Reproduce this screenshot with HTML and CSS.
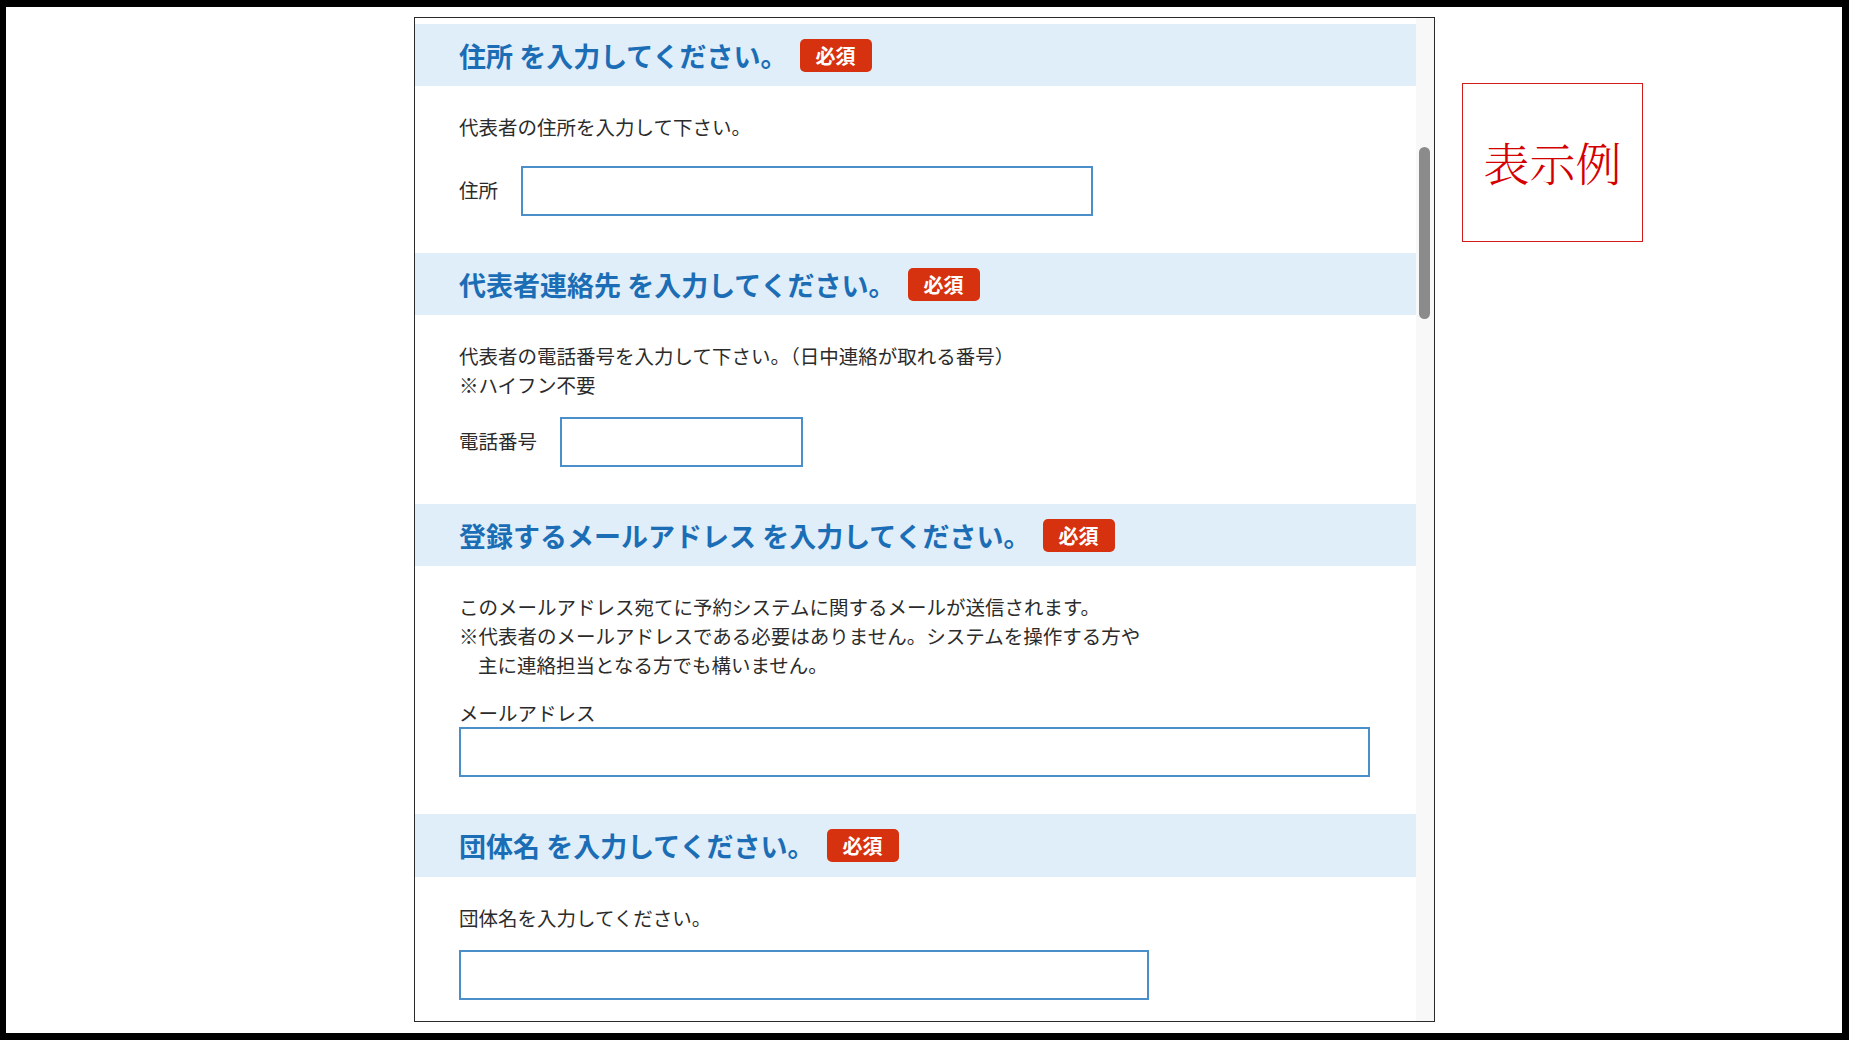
FILE: index.html
```html
<!DOCTYPE html>
<html lang="ja">
<head>
    <meta charset="UTF-8">
    <meta name="viewport" content="width=device-width, initial-scale=1.0">
    <title>申請フォーム 表示例</title>
    <link rel="stylesheet" href="styles.css">
</head>
<body>

    <div class="screen">
        <div class="panel">
            <form class="form">

                <!-- 住所 -->
                <section class="block">
                    <h2 class="block-title">住所 を入力してください。<span class="required">必須</span></h2>
                    <div class="block-body">
                        <p class="note">代表者の住所を入力して下さい。</p>
                        <div class="row row-first">
                            <label class="label" for="address">住所</label>
                            <input type="text" id="address" class="input input-address">
                        </div>
                    </div>
                </section>

                <!-- 代表者連絡先 -->
                <section class="block">
                    <h2 class="block-title">代表者連絡先 を入力してください。<span class="required">必須</span></h2>
                    <div class="block-body">
                        <p class="note">代表者の電話番号を入力して下さい。（日中連絡が取れる番号）<br>※ハイフン不要</p>
                        <div class="row">
                            <label class="label" for="tel">電話番号</label>
                            <input type="text" id="tel" class="input input-tel">
                        </div>
                    </div>
                </section>

                <!-- メールアドレス -->
                <section class="block">
                    <h2 class="block-title">登録するメールアドレス を入力してください。<span class="required">必須</span></h2>
                    <div class="block-body">
                        <p class="note">このメールアドレス宛てに予約システムに関するメールが送信されます。<br>※代表者のメールアドレスである必要はありません。システムを操作する方や<br><span class="indent">主に連絡担当となる方でも構いません。</span></p>
                        <label class="label label-top" for="mail">メールアドレス</label>
                        <input type="text" id="mail" class="input input-mail">
                    </div>
                </section>

                <!-- 団体名 -->
                <section class="block">
                    <h2 class="block-title">団体名 を入力してください。<span class="required">必須</span></h2>
                    <div class="block-body">
                        <p class="note">団体名を入力してください。</p>
                        <div class="row">
                            <input type="text" id="group" class="input input-group">
                        </div>
                    </div>
                </section>

            </form>
            <div class="scroll-track">
                <div class="scroll-thumb"></div>
            </div>
        </div>

        <div class="sample">表示例</div>
    </div>

</body>
</html>
```

FILE: styles.css
```css
html, body {
    margin: 0;
    padding: 0;
}
body {
    background: #000;
    font-family: "Noto Sans CJK JP", "Noto Sans", sans-serif;
    color: #2b2b2b;
}
.screen {
    background: #fff;
    margin: 7px 7px 7px 6px;
    height: 1026px;
    box-sizing: border-box;
    padding: 10px 0 0 408px;
    display: flex;
    align-items: flex-start;
}
.panel {
    width: 1021px;
    height: 1005px;
    box-sizing: border-box;
    border: 1px solid #2a2a2a;
    display: flex;
    overflow: hidden;
}
.form {
    width: 1001px;
    padding-top: 6px;
}
.block {
    padding-bottom: 37px;
}
.block-title {
    margin: 0;
    height: 62px;
    display: flex;
    align-items: center;
    padding-left: 44px;
    background: #e0eef9;
    color: #1b6db5;
    font-size: 27px;
    font-weight: bold;
    white-space: pre;
}
.block:last-child .block-title {
    height: 63px;
}
.required {
    display: inline-flex;
    align-items: center;
    justify-content: center;
    width: 72px;
    height: 33px;
    margin-left: 12px;
    background: #d7320f;
    color: #fff;
    border-radius: 5px;
    font-size: 20px;
    font-weight: bold;
}
.block-body {
    padding: 0 44px;
}
.note {
    margin: 26px 0 0;
    font-size: 19.5px;
    line-height: 29px;
}
.indent {
    padding-left: 19px;
}
.row {
    display: flex;
    align-items: center;
    margin-top: 18px;
}
.row-first {
    margin-top: 25px;
}
.label {
    font-size: 19.5px;
    line-height: 29px;
    margin-right: 23px;
}
.row .label {
    padding-bottom: 4px;
}
.label-top {
    display: block;
    margin: 19px 0 0;
}
.input {
    height: 50px;
    box-sizing: border-box;
    border: 2px solid #4a8fca;
    background: #fff;
    padding: 0 10px;
    font-size: 18px;
    outline: none;
}
.input-address {
    width: 572px;
}
.input-tel {
    width: 243px;
}
.input-mail {
    display: block;
    width: 911px;
}
.input-group {
    width: 690px;
}
.scroll-track {
    width: 18px;
    background: #f8f8f8;
    padding: 129px 4px 0 3px;
    box-sizing: border-box;
}
.scroll-thumb {
    width: 11px;
    height: 172px;
    background: #8b8b8b;
    border-radius: 6px;
}
.sample {
    margin: 66px 0 0 27px;
    width: 181px;
    height: 159px;
    box-sizing: border-box;
    border: 1px solid #d21c1c;
    display: flex;
    align-items: center;
    justify-content: center;
    color: #d40000;
    font-family: "Noto Serif CJK JP", "IPAMincho", "Noto Sans CJK JP", serif;
    font-weight: 300;
    font-size: 46px;
    padding-bottom: 4px;
}
```
